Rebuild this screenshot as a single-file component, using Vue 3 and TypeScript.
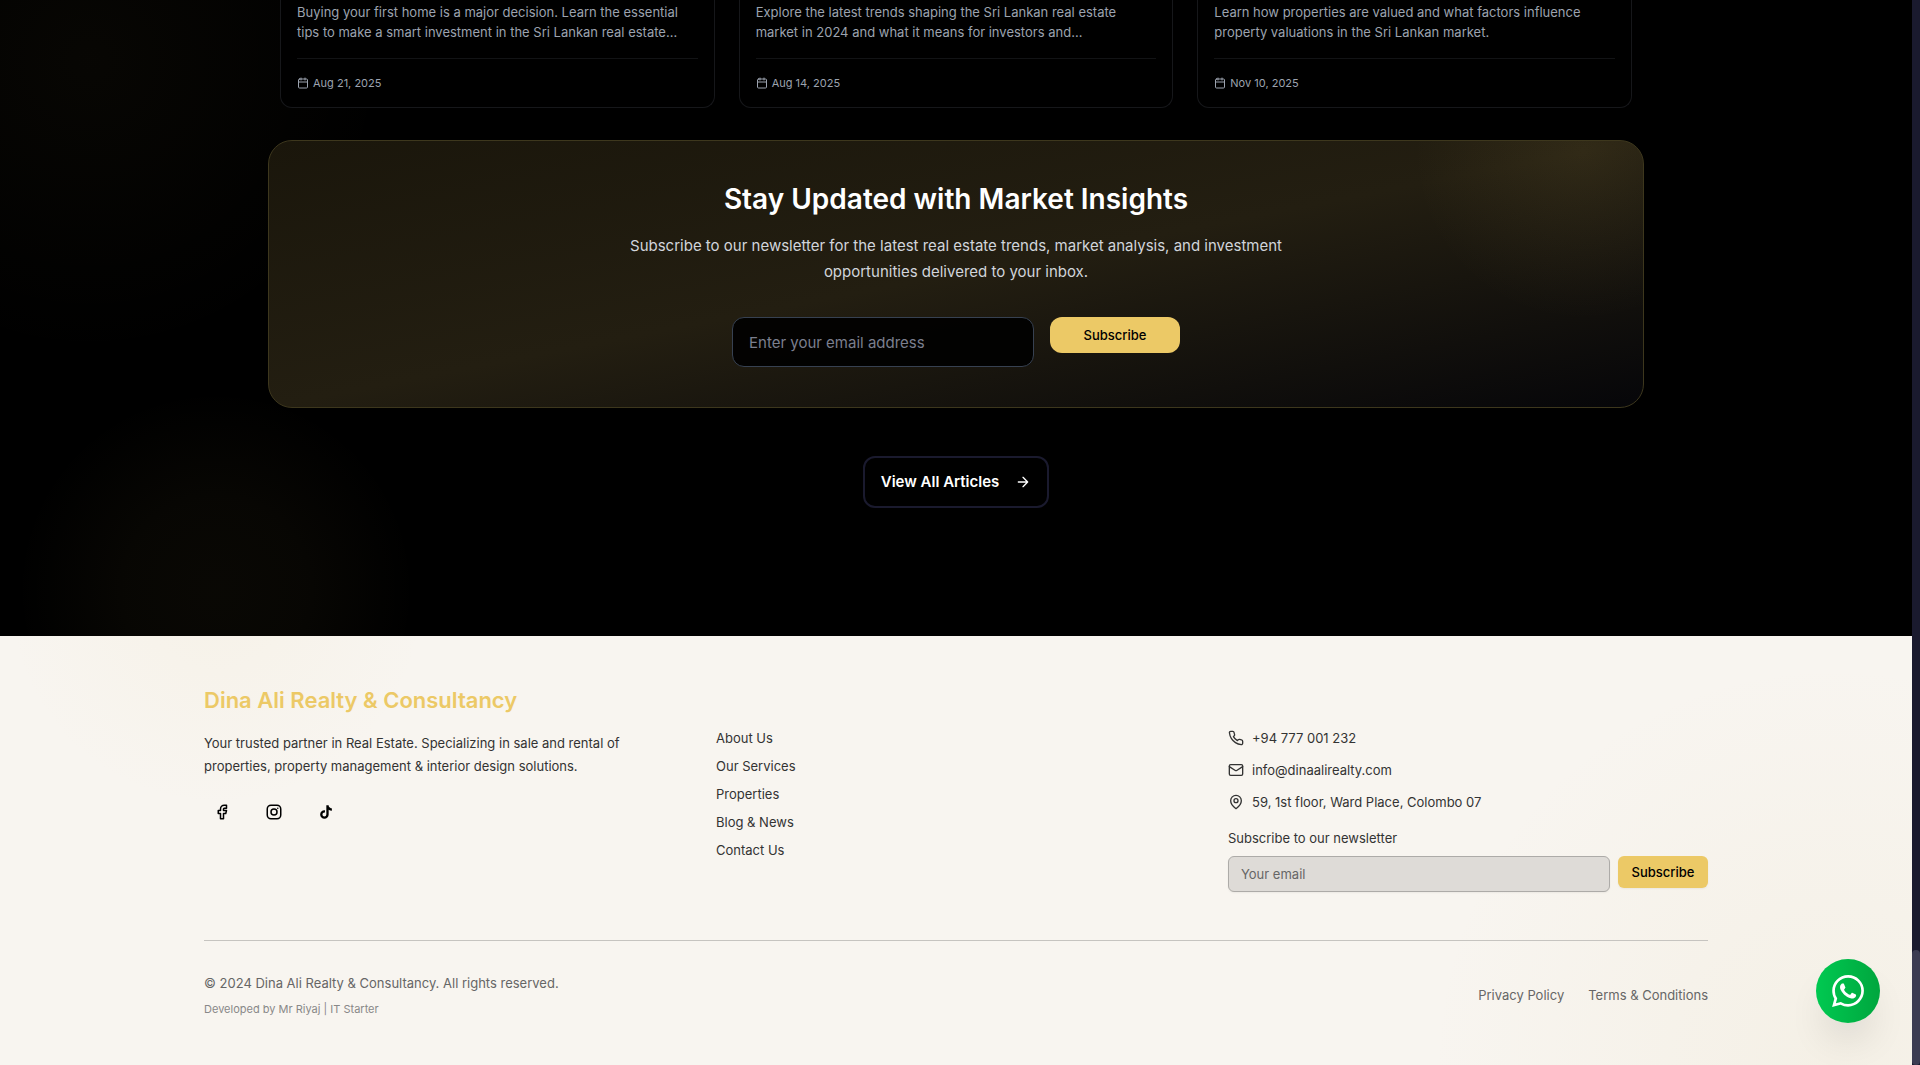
<script setup lang="ts">
interface Article {
  excerpt: string[]
  date: string
}

const articles: Article[] = [
  {
    excerpt: [
      'Buying your first home is a major decision. Learn the essential',
      'tips to make a smart investment in the Sri Lankan real estate…',
    ],
    date: 'Aug 21, 2025',
  },
  {
    excerpt: [
      'Explore the latest trends shaping the Sri Lankan real estate',
      'market in 2024 and what it means for investors and…',
    ],
    date: 'Aug 14, 2025',
  },
  {
    excerpt: [
      'Learn how properties are valued and what factors influence',
      'property valuations in the Sri Lankan market.',
    ],
    date: 'Nov 10, 2025',
  },
]

const links: string[] = ['About Us', 'Our Services', 'Properties', 'Blog & News', 'Contact Us']
</script>

<template>
  <div class="shell">
    <div class="page">
      <main class="blog">
        <div class="wrap">
          <div class="cards">
            <article v-for="a in articles" :key="a.date" class="card">
              <p class="excerpt">
                <span v-for="line in a.excerpt" :key="line">{{ line }}</span>
              </p>
              <div class="meta">
                <svg class="cal" viewBox="0 0 24 24" aria-hidden="true">
                  <path d="M8 2v4M16 2v4M3 10h18" />
                  <rect x="3" y="4" width="18" height="18" rx="2" />
                </svg>
                <time>{{ a.date }}</time>
              </div>
            </article>
          </div>

          <section class="newsletter">
            <h2>Stay Updated with Market Insights</h2>
            <p>
              Subscribe to our newsletter for the latest real estate trends, market analysis, and investment<br />
              opportunities delivered to your inbox.
            </p>
            <form class="signup" @submit.prevent>
              <input type="email" placeholder="Enter your email address" aria-label="Email address" />
              <button type="submit">Subscribe</button>
            </form>
          </section>

          <a href="#" class="view-all">
            <span>View All Articles</span>
            <svg viewBox="0 0 24 24" aria-hidden="true"><path d="M5 12h14M12 5l7 7-7 7" /></svg>
          </a>
        </div>
      </main>

      <footer class="footer">
        <div class="inner">
          <div class="columns">
            <div>
              <h3>Dina Ali Realty &amp; Consultancy</h3>
              <p class="about">
                Your trusted partner in Real Estate. Specializing in sale and rental of<br />
                properties, property management &amp; interior design solutions.
              </p>
              <div class="social">
                <a href="#" aria-label="Facebook">
                  <svg viewBox="0 0 24 24">
                    <path d="M7 10v4h3v7h4v-7h3l1-4h-4V8a1 1 0 0 1 1-1h3V3h-3a5 5 0 0 0-5 5v2H7" />
                  </svg>
                </a>
                <a href="#" aria-label="Instagram">
                  <svg viewBox="0 0 24 24">
                    <rect x="3" y="3" width="18" height="18" rx="5" />
                    <circle cx="12" cy="12" r="4" />
                    <path d="M17 7v.01" />
                  </svg>
                </a>
                <a href="#" aria-label="TikTok">
                  <svg viewBox="0 0 24 24" class="solid">
                    <path d="M16.6 5.82A4.28 4.28 0 0 1 15.54 3h-3.09v12.4a2.59 2.59 0 0 1-2.59 2.5 2.6 2.6 0 0 1-2.59-2.6c0-1.72 1.66-3.01 3.37-2.48V9.66c-3.45-.46-6.47 2.22-6.47 5.64 0 3.33 2.76 5.7 5.69 5.7 3.14 0 5.69-2.55 5.69-5.7V9.01a7.35 7.35 0 0 0 4.3 1.38V7.3s-1.88.09-3.25-1.48z" />
                  </svg>
                </a>
              </div>
            </div>

            <nav class="links">
              <a v-for="l in links" :key="l" href="#">{{ l }}</a>
            </nav>

            <div class="contact">
              <ul>
                <li>
                  <svg viewBox="0 0 24 24" aria-hidden="true">
                    <path d="M22 16.92v3a2 2 0 0 1-2.18 2 19.79 19.79 0 0 1-8.63-3.07 19.5 19.5 0 0 1-6-6 19.79 19.79 0 0 1-3.07-8.67A2 2 0 0 1 4.11 2h3a2 2 0 0 1 2 1.72 12.84 12.84 0 0 0 .7 2.81 2 2 0 0 1-.45 2.11L8.09 9.91a16 16 0 0 0 6 6l1.27-1.27a2 2 0 0 1 2.11-.45 12.84 12.84 0 0 0 2.81.7A2 2 0 0 1 22 16.92z" />
                  </svg>
                  <a href="#">+94 777 001 232</a>
                </li>
                <li>
                  <svg viewBox="0 0 24 24" aria-hidden="true">
                    <rect x="2" y="4" width="20" height="16" rx="2" />
                    <path d="m22 7-8.97 5.7a1.94 1.94 0 0 1-2.06 0L2 7" />
                  </svg>
                  <a href="#">info@dinaalirealty.com</a>
                </li>
                <li>
                  <svg viewBox="0 0 24 24" aria-hidden="true">
                    <path d="M20 10c0 6-8 12-8 12s-8-6-8-12a8 8 0 0 1 16 0Z" />
                    <circle cx="12" cy="10" r="3" />
                  </svg>
                  <span>59, 1st floor, Ward Place, Colombo 07</span>
                </li>
              </ul>
              <form @submit.prevent>
                <label for="footer-email">Subscribe to our newsletter</label>
                <div class="row">
                  <input id="footer-email" type="email" placeholder="Your email" />
                  <button type="submit">Subscribe</button>
                </div>
              </form>
            </div>
          </div>

          <div class="legal">
            <div>
              <p class="copyright">© 2024 Dina Ali Realty &amp; Consultancy. All rights reserved.</p>
              <p class="credit">Developed by Mr Riyaj | IT Starter</p>
            </div>
            <nav>
              <a href="#">Privacy Policy</a>
              <a href="#">Terms &amp; Conditions</a>
            </nav>
          </div>
        </div>
      </footer>
    </div>

    <div class="track" aria-hidden="true"><div class="thumb"></div></div>

    <a href="#" class="whatsapp" aria-label="WhatsApp">
      <svg viewBox="0 0 24 24">
        <path d="M17.472 14.382c-.297-.149-1.758-.867-2.03-.967-.273-.099-.471-.148-.67.15-.197.297-.767.966-.94 1.164-.173.199-.347.223-.644.075-.297-.15-1.255-.463-2.39-1.475-.883-.788-1.48-1.761-1.653-2.059-.173-.297-.018-.458.13-.606.134-.133.298-.347.446-.52.149-.174.198-.298.298-.497.099-.198.05-.371-.025-.52-.075-.149-.669-1.612-.916-2.207-.242-.579-.487-.5-.669-.51-.173-.008-.371-.01-.57-.01-.198 0-.52.074-.792.372-.272.297-1.04 1.016-1.04 2.479 0 1.462 1.065 2.875 1.213 3.074.149.198 2.096 3.2 5.077 4.487.709.306 1.262.489 1.694.625.712.227 1.36.195 1.871.118.571-.085 1.758-.719 2.006-1.413.248-.694.248-1.289.173-1.413-.074-.124-.272-.198-.57-.347m-5.421 7.403h-.004a9.87 9.87 0 0 1-5.031-1.378l-.361-.214-3.741.982.998-3.648-.235-.374a9.86 9.86 0 0 1-1.51-5.26c.001-5.45 4.436-9.884 9.888-9.884 2.64 0 5.122 1.03 6.988 2.898a9.825 9.825 0 0 1 2.893 6.994c-.003 5.45-4.437 9.884-9.885 9.884m8.413-18.297A11.815 11.815 0 0 0 12.05 0C5.495 0 .16 5.335.157 11.892c0 2.096.547 4.142 1.588 5.945L.057 24l6.305-1.654a11.882 11.882 0 0 0 5.683 1.448h.005c6.554 0 11.89-5.335 11.893-11.893a11.821 11.821 0 0 0-3.48-8.413Z" />
      </svg>
    </a>
  </div>
</template>

<style>
body {
  margin: 0;
  background: #f8f5f0;
}
</style>

<style scoped>
* {
  box-sizing: border-box;
}

.shell {
  display: flex;
  min-height: 100vh;
  font-family: Inter, 'Liberation Sans', sans-serif;
  font-size: 13px;
  line-height: 20px;
}

.page {
  flex: 1;
  min-width: 0;
  display: flex;
  flex-direction: column;
}

h2,
h3,
p,
ul {
  margin: 0;
  padding: 0;
}

a {
  color: inherit;
  text-decoration: none;
}

button,
input {
  font-family: inherit;
}

button {
  border: 0;
  background: #ecc966;
  color: #000;
  font-size: 13px;
  font-weight: 500;
  line-height: 20px;
  cursor: pointer;
}

svg {
  display: block;
  flex: none;
  fill: none;
  stroke: currentColor;
  stroke-width: 2;
  stroke-linecap: round;
  stroke-linejoin: round;
}

.blog {
  background:
    radial-gradient(circle at 216px 590px, rgba(236, 201, 102, 0.04) 0, rgba(236, 201, 102, 0.03) 90px, rgba(236, 201, 102, 0) 200px),
    radial-gradient(circle at 90px 60px, rgba(236, 201, 102, 0.03) 0, rgba(236, 201, 102, 0) 300px),
    #000;
  padding-bottom: 128px;
}

.wrap {
  max-width: 1376px;
  margin: 0 auto;
  display: flex;
  flex-direction: column;
  align-items: center;
}

.cards {
  align-self: stretch;
  display: grid;
  grid-template-columns: repeat(3, 1fr);
  gap: 24px;
  padding: 0 12px;
  margin-bottom: 32px;
}

.card {
  border: 1px solid #16171a;
  border-top: 0;
  border-radius: 0 0 12px 12px;
  background: #000;
  padding: 2px 16px 16px;
  color: #9ca3af;
}

.excerpt span {
  display: block;
  white-space: nowrap;
}

.meta {
  display: flex;
  align-items: center;
  gap: 4px;
  margin-top: 16px;
  padding-top: 16px;
  border-top: 1px solid #121315;
  font-size: 11px;
  line-height: 16px;
}

.cal {
  width: 12px;
  height: 12px;
}

.newsletter {
  align-self: stretch;
  display: flex;
  flex-direction: column;
  align-items: center;
  gap: 16px;
  padding: 40px;
  border: 1px solid #3d371d;
  border-radius: 24px;
  background:
    radial-gradient(circle at calc(100% - 60px) 10px, rgba(236, 201, 102, 0.07) 0, rgba(236, 201, 102, 0) 170px),
    linear-gradient(to bottom right, #1a160b 0%, #231e11 50%, #060609 100%);
  text-align: center;
}

.newsletter h2 {
  color: #fff;
  font-size: 28px;
  font-weight: 600;
  line-height: 36px;
}

.newsletter p {
  color: #d1d5db;
  font-size: 15px;
  line-height: 26px;
}

.signup {
  display: flex;
  align-items: flex-start;
  gap: 16px;
  margin-top: 16px;
}

.signup input {
  width: 302px;
  height: 50px;
  padding: 0 16px;
  border: 1px solid #374151;
  border-radius: 12px;
  background: rgba(0, 0, 0, 0.9);
  color: #fff;
  font-size: 15px;
}

.signup input::placeholder {
  color: #7b7f8e;
}

.signup button {
  width: 130px;
  padding: 8px 0;
  border-radius: 12px;
}

.view-all {
  display: flex;
  align-items: center;
  gap: 16px;
  margin-top: 48px;
  padding: 12px 16px;
  border: 2px solid #1a1a2e;
  border-radius: 12px;
  color: #fff;
  font-size: 15px;
  font-weight: 600;
  line-height: 24px;
}

.view-all svg {
  width: 16px;
  height: 16px;
}

.footer {
  flex: 1;
  padding: 48px 24px;
  background:
    radial-gradient(circle at 216px -40px, rgba(226, 200, 130, 0.07) 0, rgba(236, 201, 102, 0) 210px),
    radial-gradient(circle at calc(100% - 80px) 100%, rgba(214, 196, 140, 0.1) 0, rgba(236, 201, 102, 0) 400px),
    #f8f5f0;
  color: #333;
}

.inner {
  max-width: 1504px;
  margin: 0 auto;
}

.columns {
  display: grid;
  grid-template-columns: repeat(3, 1fr);
  gap: 32px;
  padding-bottom: 48px;
  border-bottom: 1px solid #c6c4c0;
}

.footer h3 {
  color: #ecc966;
  font-size: 22px;
  font-weight: 600;
  line-height: 32px;
}

.about {
  margin-top: 16px;
  line-height: 23px;
}

.social {
  display: flex;
  gap: 16px;
  margin-top: 16px;
  color: #000;
}

.social a {
  padding: 9px;
}

.social svg {
  width: 18px;
  height: 18px;
}

.social .solid {
  fill: currentColor;
  stroke: none;
}

.links {
  display: flex;
  flex-direction: column;
  align-items: flex-start;
  gap: 8px;
  padding-top: 44px;
}

.contact {
  padding-top: 44px;
}

.contact ul {
  display: flex;
  flex-direction: column;
  gap: 12px;
  list-style: none;
}

.contact li {
  display: flex;
  align-items: center;
  gap: 8px;
}

.contact li svg {
  width: 16px;
  height: 16px;
}

.contact form {
  margin-top: 16px;
}

.contact label {
  display: block;
}

.row {
  display: flex;
  align-items: flex-start;
  gap: 8px;
  margin-top: 8px;
}

.row input {
  flex: 1;
  min-width: 0;
  height: 36px;
  padding: 0 12px;
  border: 1px solid #adaba8;
  border-radius: 6px;
  background: #dedbd7;
  box-shadow: 0 1px 2px rgba(0, 0, 0, 0.05);
  color: #333;
  font-size: 13px;
}

.row input::placeholder {
  color: #666;
}

.row button {
  width: 90px;
  padding: 6px 0;
  border-radius: 6px;
  box-shadow: 0 1px 2px rgba(0, 0, 0, 0.05);
}

.legal {
  display: flex;
  justify-content: space-between;
  align-items: center;
  padding-top: 32px;
  color: #666;
}

.credit {
  margin-top: 8px;
  color: #888;
  font-size: 11px;
  line-height: 16px;
}

.legal nav {
  display: flex;
  gap: 24px;
}

.track {
  display: flex;
  flex-direction: column;
  justify-content: flex-end;
  width: 8px;
  background: #1a1a2e;
}

.thumb {
  height: 115px;
  border-radius: 4px;
  background: #3c3c52;
}

.whatsapp {
  position: fixed;
  right: 40px;
  bottom: 42px;
  display: grid;
  place-items: center;
  width: 64px;
  height: 64px;
  border-radius: 50%;
  background: linear-gradient(to right, #00c951, #00a63e);
  box-shadow: 0 24px 40px -12px rgba(0, 0, 0, 0.16);
  color: #fff;
}

.whatsapp svg {
  width: 32px;
  height: 32px;
  fill: currentColor;
  stroke: none;
}
</style>
